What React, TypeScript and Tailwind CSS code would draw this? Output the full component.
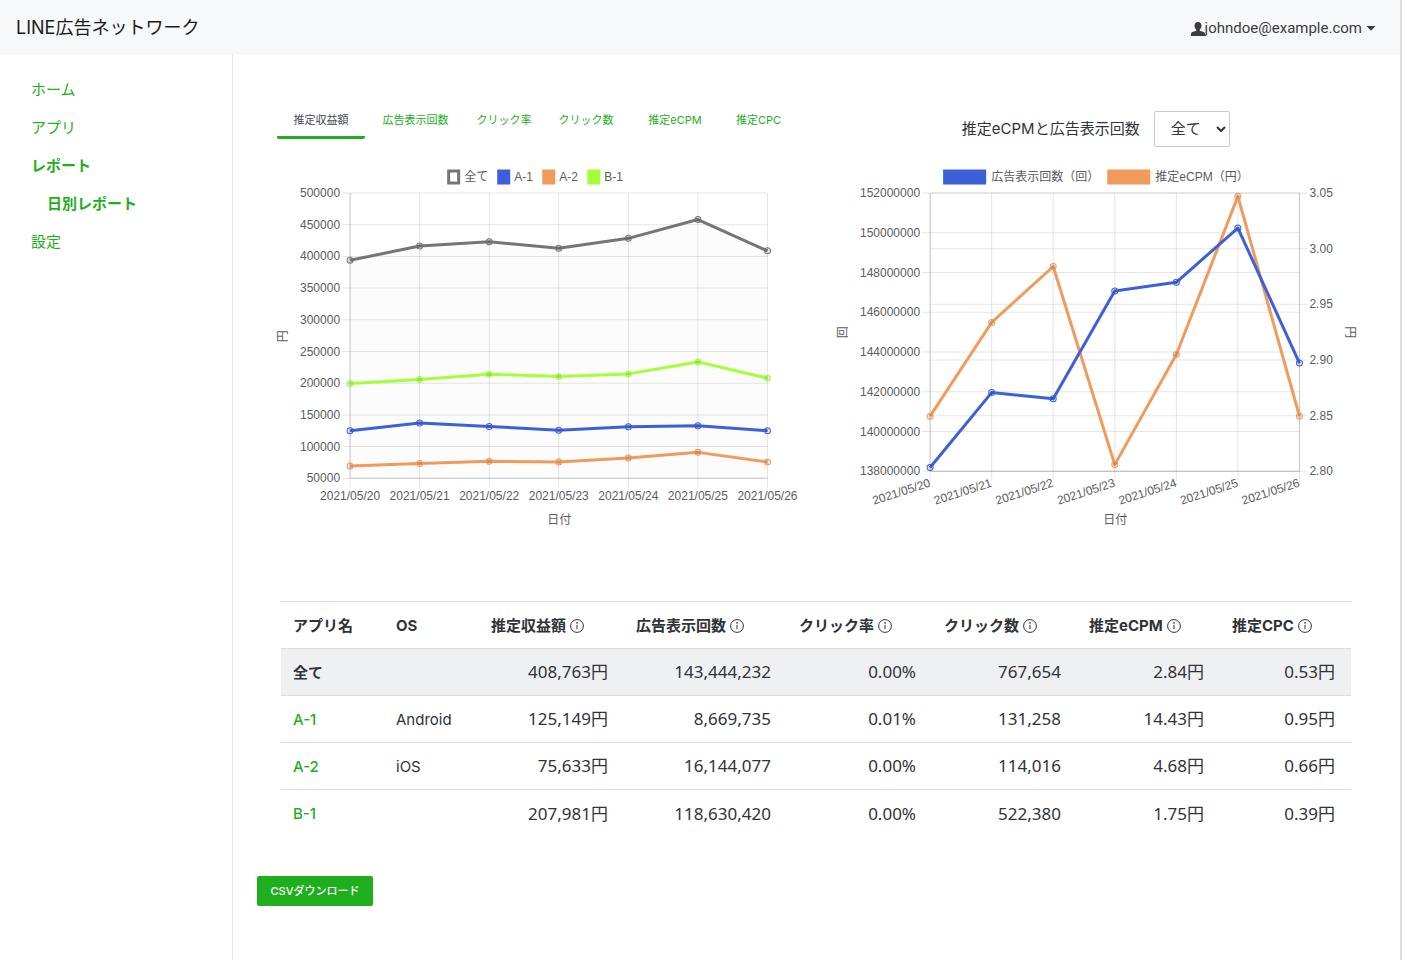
import { type ReactNode } from 'react';

const dates = ['2021/05/20', '2021/05/21', '2021/05/22', '2021/05/23', '2021/05/24', '2021/05/25', '2021/05/26'];

type Series = { label: string; color: string; values: number[]; min: number; max: number };
type Plot = { left: number; right: number; top: number; bottom: number };

const navItems = [
  { label: 'ホーム', className: 'pl-[31px]' },
  { label: 'アプリ', className: 'pl-[31px]' },
  { label: 'レポート', className: 'pl-[31px] font-bold' },
  { label: '日別レポート', className: 'pl-[47px] font-bold' },
  { label: '設定', className: 'pl-[31px]' },
];

const tabs = [
  { label: '推定収益額', width: 'w-[88px]' },
  { label: '広告表示回数', width: 'w-[101px]' },
  { label: 'クリック率', width: 'w-[76px]' },
  { label: 'クリック数', width: 'w-[88px]' },
  { label: '推定eCPM', width: 'w-[90px]' },
  { label: '推定CPC', width: 'w-[77px]' },
];

const revenueSeries: Series[] = [
  { label: '全て', color: '#757575', min: 50000, max: 500000, values: [393900, 416400, 423000, 413000, 428500, 458200, 408763] },
  { label: 'A-1', color: '#3d60da', min: 50000, max: 500000, values: [125000, 137300, 131800, 125800, 131300, 132900, 125149] },
  { label: 'A-2', color: '#f09b5b', min: 50000, max: 500000, values: [69200, 73500, 76700, 75900, 82200, 90900, 75633] },
  { label: 'B-1', color: '#a4ff38', min: 50000, max: 500000, values: [199600, 205900, 214100, 210700, 214700, 233600, 207981] },
];

const ecpmSeries: Series[] = [
  { label: '推定eCPM（円）', color: '#f09b5b', min: 2.8, max: 3.05, values: [2.8495, 2.9337, 2.984, 2.806, 2.905, 3.047, 2.8497] },
  { label: '広告表示回数（回）', color: '#3d60da', min: 138000000, max: 152000000, values: [138190000, 141960000, 141650000, 147070000, 147510000, 150240000, 143444232] },
];

const columns = ['推定収益額', '広告表示回数', 'クリック率', 'クリック数', '推定eCPM', '推定CPC'];

const rows = [
  { name: '全て', os: '', total: true, cells: ['408,763円', '143,444,232', '0.00%', '767,654', '2.84円', '0.53円'] },
  { name: 'A-1', os: 'Android', total: false, cells: ['125,149円', '8,669,735', '0.01%', '131,258', '14.43円', '0.95円'] },
  { name: 'A-2', os: 'iOS', total: false, cells: ['75,633円', '16,144,077', '0.00%', '114,016', '4.68円', '0.66円'] },
  { name: 'B-1', os: '', total: false, cells: ['207,981円', '118,630,420', '0.00%', '522,380', '1.75円', '0.39円'] },
];

const xAt = (plot: Plot, i: number) => plot.left + ((plot.right - plot.left) * i) / (dates.length - 1);

function pointsOf(plot: Plot, s: Series) {
  return s.values.map((v, i) => ({
    x: xAt(plot, i),
    y: plot.bottom - ((v - s.min) / (s.max - s.min)) * (plot.bottom - plot.top),
  }));
}

function SeriesLine({ plot, series }: { plot: Plot; series: Series }) {
  const points = pointsOf(plot, series);
  return (
    <g>
      <polyline
        points={points.map((p) => `${p.x},${p.y}`).join(' ')}
        fill="none"
        stroke={series.color}
        strokeWidth="3"
        strokeLinejoin="round"
      />
      {points.map((p) => (
        <circle key={p.x} cx={p.x} cy={p.y} r="3" fill="#000" fillOpacity="0.1" stroke={series.color} />
      ))}
    </g>
  );
}

function VerticalGrid({ plot }: { plot: Plot }) {
  return (
    <g stroke="#000" strokeOpacity="0.1">
      {dates.map((d, i) => (
        <line key={d} x1={xAt(plot, i)} x2={xAt(plot, i)} y1={plot.top} y2={plot.bottom + 10} />
      ))}
    </g>
  );
}

function Chart({ label, children }: { label: string; children: ReactNode }) {
  return (
    <svg
      viewBox="0 0 520 370"
      role="img"
      aria-label={label}
      className="mt-[13px] block w-full overflow-visible fill-[#5c5c5c] font-['Liberation_Sans','Noto_Sans_CJK_JP',sans-serif] text-[12px]"
    >
      {children}
    </svg>
  );
}

function RevenueChart() {
  const plot = { left: 73, right: 490, top: 33, bottom: 318 };
  const ticks = Array.from({ length: 10 }, (_, i) => 500000 - i * 50000);
  const legendX = [170, 220, 265, 310];
  const area = pointsOf(plot, revenueSeries[0]).map((p) => `${p.x},${p.y}`).join(' ');

  return (
    <Chart label="推定収益額">
      {revenueSeries.map((s, i) => (
        <g key={s.label}>
          {i === 0 ? (
            <rect x={legendX[i] + 1.5} y="11" width="10" height="12" fill="#fff" stroke={s.color} strokeWidth="3" />
          ) : (
            <rect x={legendX[i]} y="9.5" width="13" height="15" fill={s.color} />
          )}
          <text x={legendX[i] + 17} y="21">{s.label}</text>
        </g>
      ))}
      <polygon points={`${area} ${plot.right},${plot.bottom} ${plot.left},${plot.bottom}`} fill="#000" fillOpacity="0.012" />
      <VerticalGrid plot={plot} />
      {ticks.map((t, i) => {
        const y = plot.top + ((plot.bottom - plot.top) * i) / 9;
        return (
          <g key={t}>
            <line x1={plot.left - 8} x2={plot.right} y1={y} y2={y} stroke="#000" strokeOpacity="0.1" />
            <text x={plot.left - 10} y={y + 4} textAnchor="end">{t}</text>
          </g>
        );
      })}
      <line x1={plot.left} x2={plot.left} y1={plot.top} y2={plot.bottom} stroke="#000" strokeOpacity="0.15" />
      <line x1={plot.left} x2={plot.right} y1={plot.bottom} y2={plot.bottom} stroke="#000" strokeOpacity="0.15" />
      {dates.map((d, i) => (
        <text key={d} x={xAt(plot, i)} y="340" textAnchor="middle">{d}</text>
      ))}
      <text x="282" y="364" textAnchor="middle">日付</text>
      <text transform="translate(10 176) rotate(-90)" textAnchor="middle">円</text>
      {[...revenueSeries].reverse().map((s) => (
        <SeriesLine key={s.label} plot={plot} series={s} />
      ))}
    </Chart>
  );
}

function EcpmChart() {
  const plot = { left: 93, right: 462, top: 33, bottom: 311 };
  const leftTicks = Array.from({ length: 8 }, (_, i) => 152000000 - i * 2000000);
  const rightTicks = ['3.05', '3.00', '2.95', '2.90', '2.85', '2.80'];

  return (
    <Chart label="推定eCPMと広告表示回数">
      <rect x="106" y="9.5" width="43" height="15" fill="#3d60da" />
      <text x="154" y="21">広告表示回数（回）</text>
      <rect x="270" y="9.5" width="43" height="15" fill="#f09b5b" />
      <text x="318" y="21">推定eCPM（円）</text>
      <VerticalGrid plot={plot} />
      {leftTicks.map((t, i) => {
        const y = plot.top + ((plot.bottom - plot.top) * i) / 7;
        return (
          <g key={t}>
            <line x1={plot.left - 8} x2={plot.right} y1={y} y2={y} stroke="#000" strokeOpacity="0.1" />
            <text x={plot.left - 10} y={y + 4} textAnchor="end">{t}</text>
          </g>
        );
      })}
      {rightTicks.map((t, i) => {
        const y = plot.top + ((plot.bottom - plot.top) * i) / 5;
        return (
          <g key={t}>
            <line x1={plot.left} x2={plot.right + 8} y1={y} y2={y} stroke="#000" strokeOpacity="0.1" />
            <text x={plot.right + 10} y={y + 4}>{t}</text>
          </g>
        );
      })}
      <line x1={plot.left} x2={plot.left} y1={plot.top} y2={plot.bottom} stroke="#000" strokeOpacity="0.15" />
      <line x1={plot.right} x2={plot.right} y1={plot.top} y2={plot.bottom} stroke="#000" strokeOpacity="0.15" />
      <line x1={plot.left} x2={plot.right} y1={plot.bottom} y2={plot.bottom} stroke="#000" strokeOpacity="0.15" />
      {dates.map((d, i) => (
        <text key={d} transform={`translate(${xAt(plot, i) + 1} 326) rotate(-18)`} textAnchor="end">{d}</text>
      ))}
      <text x="278" y="364" textAnchor="middle">日付</text>
      <text transform="translate(10 172) rotate(-90)" textAnchor="middle">回</text>
      <text transform="translate(509 172) rotate(90)" textAnchor="middle">円</text>
      {ecpmSeries.map((s) => (
        <SeriesLine key={s.label} plot={plot} series={s} />
      ))}
    </Chart>
  );
}

function InfoIcon() {
  return (
    <svg viewBox="0 0 14 14" className="size-3.5 shrink-0" fill="none" stroke="currentColor" aria-hidden="true">
      <circle cx="7" cy="7" r="6.4" />
      <path d="M7 5.8v4.4" />
      <circle cx="7" cy="3.9" r="0.8" fill="currentColor" stroke="none" />
    </svg>
  );
}

function Header() {
  return (
    <header className="flex h-[55px] items-center justify-between bg-[#f7f8fa] pr-6 pl-4">
      <a href="#" className="text-[18px] text-[#1b1b1b]">LINE広告ネットワーク</a>
      <button
        type="button"
        className="flex items-center pt-0.5 font-['Roboto','Noto_Sans_CJK_JP',sans-serif] text-[15px] text-[#3c3c3c]"
      >
        <svg viewBox="0 0 14 14" className="size-3.5" fill="currentColor" aria-hidden="true">
          <path d="M7 0C4.800 0 3.500 1.600 3.500 3.800c0 1.600.7 3 1.700 3.800v1.200L1.500 9.900C.5 10.200 0 10.900 0 11.900V14h14v-2.100c0-1-.5-1.700-1.500-2L8.800 8.800V7.600c1-.8 1.700-2.200 1.700-3.800C10.500 1.600 9.200 0 7 0z" />
        </svg>
        johndoe@example.com
        <svg viewBox="0 0 10 5" className="ml-1 h-[5px] w-2.5" fill="currentColor" aria-hidden="true">
          <path d="M0.500 0h9L5 4.800z" />
        </svg>
      </button>
    </header>
  );
}

function Sidebar() {
  return (
    <nav className="w-[233px] shrink-0 border-r border-[#e1e3e6] pt-4">
      <ul>
        {navItems.map((item) => (
          <li key={item.label} className={item.className}>
            <a href="#" className="block text-[15px] leading-[38px] text-[#1eae1e]">{item.label}</a>
          </li>
        ))}
      </ul>
    </nav>
  );
}

function ReportTable() {
  return (
    <table className="w-full table-fixed border-t border-[#d9dbde] text-left text-[15px] text-[#303337]">
      <colgroup>
        <col className="w-[103px]" />
        <col className="w-[95px]" />
        <col className="w-[145px]" />
        <col className="w-[163px]" />
        <col className="w-[145px]" />
        <col className="w-[145px]" />
        <col className="w-[143px]" />
        <col className="w-[131px]" />
      </colgroup>
      <thead>
        <tr className="h-[47px] border-b border-[#d9dbde]">
          <th className="pt-0.5 pl-3">アプリ名</th>
          <th className="pt-0.5 pl-3">OS</th>
          {columns.map((c) => (
            <th key={c} className="pt-0.5 pl-3 whitespace-nowrap">
              <span className="flex items-center gap-1">
                {c}
                <InfoIcon />
              </span>
            </th>
          ))}
        </tr>
      </thead>
      <tbody>
        {rows.map((row) => (
          <tr
            key={row.name}
            className={row.total ? 'h-[47px] border-b border-[#d9dbde] bg-[#eff0f2]' : 'h-[47px] border-b border-[#d9dbde] last:border-b-0'}
          >
            <td className="pt-0.5 pl-3">
              {row.total ? <strong>{row.name}</strong> : <a href="#" className="font-medium text-[#1eae1e]">{row.name}</a>}
            </td>
            <td className="pt-0.5 pl-3">{row.os}</td>
            {row.cells.map((cell, i) => (
              <td key={columns[i]} className="pr-4 text-right font-['Noto_Sans','Noto_Sans_CJK_JP',sans-serif] text-[17px] leading-6">
                {cell}
              </td>
            ))}
          </tr>
        ))}
      </tbody>
    </table>
  );
}

export default function App() {
  return (
    <div className="flex min-h-screen flex-col border-r-2 border-[#dcdcdc] bg-white font-['Inter','Noto_Sans_CJK_JP',sans-serif]">
      <Header />
      <div className="flex flex-1">
        <Sidebar />
        <main className="min-w-0 flex-1 px-6 pt-[46px] pb-12">
          <div className="grid grid-cols-2">
            <section className="pr-[19px] pl-5">
              <div role="tablist" className="flex h-[46px] items-start">
                {tabs.map((tab, i) => (
                  <button
                    key={tab.label}
                    type="button"
                    role="tab"
                    aria-selected={i === 0}
                    className={`h-[38px] shrink-0 border-b-3 pt-1 text-[11px] ${tab.width} ${
                      i === 0 ? 'rounded-xs border-[#1eae1e] text-[#444a52]' : 'border-transparent text-[#1eae1e]'
                    }`}
                  >
                    {tab.label}
                  </button>
                ))}
              </div>
              <RevenueChart />
            </section>
            <section className="pr-[19px] pl-5">
              <div className="flex h-[46px] items-end justify-center gap-3.5 pr-0.5 text-[15px] text-[#303337]">
                <label htmlFor="app-filter" className="leading-9">推定eCPMと広告表示回数</label>
                <span className="relative">
                  <select id="app-filter" className="block h-9 w-[76px] appearance-none rounded-xs border border-[#c5cad1] bg-white pl-4 text-[15px]">
                    <option>全て</option>
                  </select>
                  <svg viewBox="0 0 10 6" className="pointer-events-none absolute top-[15px] right-1 h-1.5 w-2.5" fill="none" stroke="currentColor" strokeWidth="2" aria-hidden="true">
                    <path d="M1 1l4 4 4-4" />
                  </svg>
                </span>
              </div>
              <EcpmChart />
            </section>
          </div>
          <div className="mt-[71px] mr-[25px] ml-6">
            <ReportTable />
          </div>
          <button type="button" className="mt-[39px] h-[30px] w-[116px] rounded-xs bg-[#1eae1e] text-[11px] font-medium text-white">
            CSVダウンロード
          </button>
        </main>
      </div>
    </div>
  );
}
